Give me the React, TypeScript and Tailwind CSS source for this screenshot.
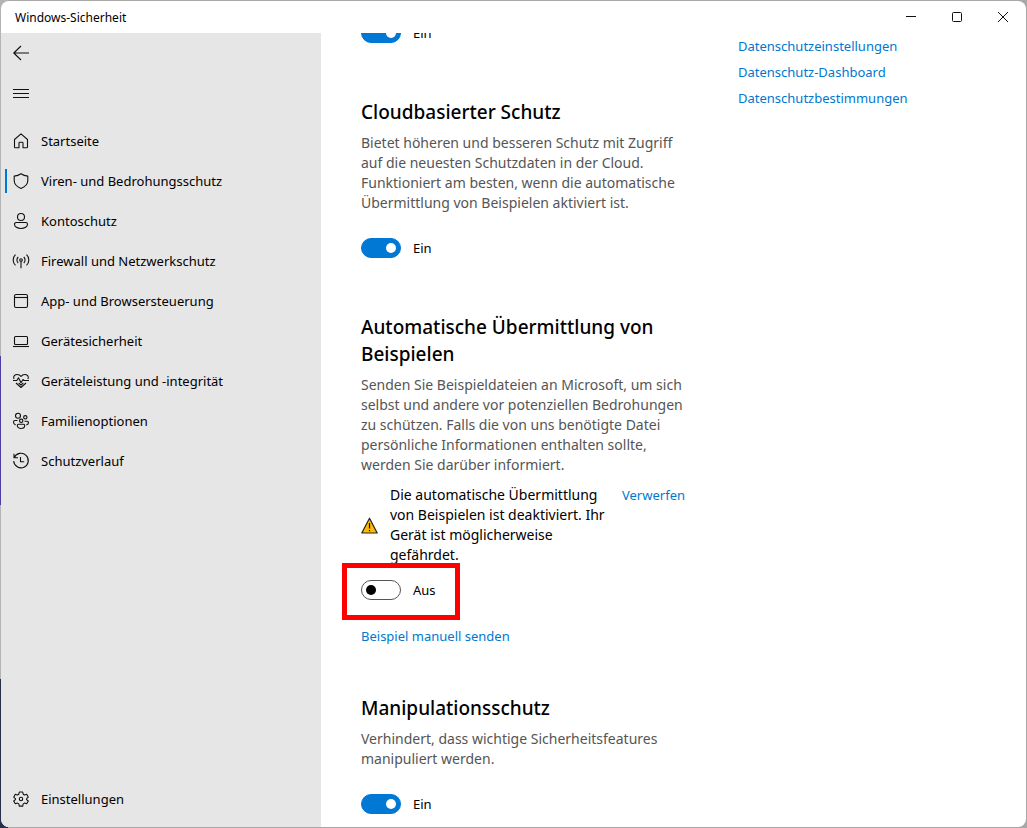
import { useId, useState, type ReactNode } from 'react';

const iconPaths: Record<string, ReactNode> = {
  home: <path d="M1.5 6.500 8 .8l6.500 5.700V14a.8.8 0 0 1-.8.8H10V10a.8.8 0 0 0-.8-.8H6.800A.8.8 0 0 0 6 10v4.800H2.300a.8.8 0 0 1-.8-.8z" />,
  shield: <path d="M8 .8c2 1.500 4.200 2.200 6.800 2.300v4.400c0 3.700-2.600 6.300-6.800 7.900-4.200-1.600-6.800-4.200-6.800-7.900V3.100C3.800 3 6 2.300 8 .8z" />,
  account: (
    <>
      <circle cx="8" cy="4" r="3.500" />
      <path d="M3.200 9.500h9.600a1.700 1.700 0 0 1 1.700 1.700c0 2.400-2.800 4.300-6.500 4.300s-6.500-1.900-6.500-4.300a1.700 1.700 0 0 1 1.700-1.700z" />
    </>
  ),
  network: (
    <>
      <circle cx="8" cy="7" r="1.300" />
      <path d="M8 8.300v7M5.200 10a4.200 4.200 0 0 1 0-6M10.800 10a4.200 4.200 0 0 0 0-6M2.500 12.300a7.200 7.200 0 0 1 0-10.600M13.500 12.300a7.200 7.200 0 0 0 0-10.600" />
    </>
  ),
  app: (
    <>
      <rect x="1.500" y="1.500" width="13" height="13" rx="1.500" />
      <path d="M1.500 4.500h13" />
    </>
  ),
  laptop: (
    <>
      <rect x="1.500" y="3.500" width="13" height="8" rx="1" />
      <path d="M0 13.500h16" />
    </>
  ),
  heart: (
    <>
      <path d="M1 6C-.2 3.200 2 1.500 4.300 1.500 6 1.500 7.200 2.300 8 3.500c.8-1.200 2-2 3.700-2 2.300 0 4.500 1.700 3.300 4.500" />
      <path d="M0 7.500h3.800l1.700-2.700 2.500 5 2-3.300 1 1H16M3 10l5 4.500L13 10M5.700 10 8 12.200 10.300 10" />
    </>
  ),
  family: (
    <>
      <circle cx="5" cy="2.800" r="2.500" />
      <circle cx="12.300" cy="4.300" r="1.700" />
      <circle cx="8.200" cy="7.800" r="1.700" />
      <path d="M4.500 7.500H2A1.500 1.500 0 0 0 .5 9c0 1.500.8 2.500 2.200 3M11.500 8.300H14a1.500 1.500 0 0 1 1.500 1.500c0 1.100-.8 1.800-2.200 2.200M5.500 11.300h5a1.200 1.200 0 0 1 1.200 1.200c0 1.800-1.600 3-3.700 3s-3.700-1.200-3.700-3a1.200 1.200 0 0 1 1.200-1.200z" />
    </>
  ),
  history: <path d="M1 .8v4h4M1.300 4.600A7.300 7.300 0 1 1 .7 8M7.500 4v4.800h3.700" />,
  settings: (
    <>
      <circle cx="8" cy="8" r="1.700" />
      <path d="m6.300 1-.5 2.200-1.300.8-2.200-.7L.7 6.200l1.700 1.500v.9L.7 10l1.600 2.800 2.200-.7 1.300.8.500 2.200h3.400l.5-2.200 1.300-.8 2.200.7 1.600-2.800-1.700-1.400v-.9l1.700-1.500-1.600-2.900-2.200.7-1.300-.8L9.700 1z" />
    </>
  ),
  back: <path d="M16 8H.8M8 1 .8 8 8 15" />,
  menu: <path d="M0 4.500h16M0 8.500h16M0 12.500h16" />,
};

function Icon({ name }: { name: string }) {
  return (
    <svg viewBox="0 0 16 16" className="size-4 shrink-0 overflow-visible" fill="none" stroke="#111" strokeWidth="1.100" strokeLinejoin="round" aria-hidden="true">
      {iconPaths[name]}
    </svg>
  );
}

const navItems = [
  { icon: 'home', label: 'Startseite' },
  { icon: 'shield', label: 'Viren- und Bedrohungsschutz', active: true },
  { icon: 'account', label: 'Kontoschutz' },
  { icon: 'network', label: 'Firewall und Netzwerkschutz' },
  { icon: 'app', label: 'App- und Browsersteuerung' },
  { icon: 'laptop', label: 'Gerätesicherheit' },
  { icon: 'heart', label: 'Geräteleistung und -integrität' },
  { icon: 'family', label: 'Familienoptionen' },
  { icon: 'history', label: 'Schutzverlauf' },
];

function NavItem({ icon, label, active }: { icon: string; label: string; active?: boolean }) {
  return (
    <a href="#" aria-current={active ? 'page' : undefined} className="flex h-10 items-center pl-1 text-[13px]">
      <span className={active ? 'mr-[6px] h-6 w-[2px] bg-[#0078d4]' : 'mr-[6px] h-6 w-[2px]'} />
      <span className="flex items-center gap-3">
        <Icon name={icon} />
        <span className="pt-[2px]">{label}</span>
      </span>
    </a>
  );
}

function Toggle({ initial }: { initial: boolean }) {
  const id = useId();
  const [on, setOn] = useState(initial);
  return (
    <div className="flex h-5 items-center gap-3">
      <input
        id={id}
        type="checkbox"
        role="switch"
        checked={on}
        onChange={(e) => setOn(e.target.checked)}
        className="flex h-5 w-10 appearance-none items-center rounded-full border border-[#555] bg-white px-1 before:size-[10px] before:rounded-full before:bg-black checked:justify-end checked:border-[#0078d4] checked:bg-[#0078d4] checked:before:bg-white"
      />
      <label htmlFor={id} className="pt-[2px] text-[13px]">
        {on ? 'Ein' : 'Aus'}
      </label>
    </div>
  );
}

function Heading({ children }: { children: ReactNode }) {
  return <h2 className="mb-[7px] text-[19px] leading-[27px] font-medium">{children}</h2>;
}

function Description({ children }: { children: ReactNode }) {
  return <p className="text-[14px] leading-5 text-[#555]">{children}</p>;
}

const linkClass = 'text-[13px] leading-5 text-[#0078d0] hover:underline';

export default function App() {
  return (
    <div className="flex min-h-screen bg-[#a8a8a8] bg-[linear-gradient(to_bottom,#b4b4b4_43%,#4a3fa0_43%,#4a3fa0_61%,#b4b4b4_61%,#b4b4b4_82%,#26304a_82%)] bg-[length:8px_100%] bg-no-repeat p-px font-['Noto_Sans','Open_Sans',sans-serif] text-black">
      <div className="flex grow flex-col overflow-hidden rounded-lg bg-white">
        <header className="flex h-8 items-center justify-between pl-[14px]">
          <h1 className="pt-[2px] text-[12px]">Windows-Sicherheit</h1>
          <div className="flex h-full">
            <button type="button" aria-label="Minimieren" className="flex w-[46px] items-center justify-center">
              <svg viewBox="0 0 10 10" className="size-[10px]" stroke="#111" fill="none"><path d="M0 4.500h10" /></svg>
            </button>
            <button type="button" aria-label="Maximieren" className="flex w-[46px] items-center justify-center">
              <svg viewBox="0 0 10 10" className="size-[10px]" stroke="#111" fill="none"><rect x=".5" y=".5" width="9" height="9" rx="1" /></svg>
            </button>
            <button type="button" aria-label="Schließen" className="flex w-[46px] items-center justify-center">
              <svg viewBox="0 0 10 10" className="size-[10px]" stroke="#111" fill="none"><path d="m0 0 10 10M10 0 0 10" /></svg>
            </button>
          </div>
        </header>

        <div className="flex grow">
          <nav className="flex w-80 shrink-0 flex-col bg-[#e6e6e6] pb-2">
            <button type="button" aria-label="Zurück" className="flex h-10 w-10 items-center justify-center">
              <Icon name="back" />
            </button>
            <button type="button" aria-label="Navigation öffnen" className="mb-2 flex h-10 w-10 items-center justify-center">
              <Icon name="menu" />
            </button>
            {navItems.map((item) => (
              <NavItem key={item.label} {...item} />
            ))}
            <div className="mt-auto">
              <NavItem icon="settings" label="Einstellungen" />
            </div>
          </nav>

          <main className="flex grow items-start gap-[53px] overflow-hidden pl-10">
            <div className="-mt-[10px] flex w-[324px] shrink-0 flex-col gap-14 pb-3">
              <Toggle initial />

              <section>
                <Heading>Cloudbasierter Schutz</Heading>
                <Description>
                  Bietet höheren und besseren Schutz mit Zugriff auf die neuesten Schutzdaten in der Cloud. Funktioniert am besten, wenn die automatische Übermittlung von Beispielen aktiviert ist.
                </Description>
                <div className="mt-[25px]">
                  <Toggle initial />
                </div>
              </section>

              <section>
                <Heading>Automatische Übermittlung von Beispielen</Heading>
                <Description>
                  Senden Sie Beispieldateien an Microsoft, um sich selbst und andere vor potenziellen Bedrohungen zu schützen. Falls die von uns benötigte Datei persönliche Informationen enthalten sollte, werden Sie darüber informiert.
                </Description>
                <div role="alert" className="mt-[10px] flex items-start">
                  <svg viewBox="0 0 17 17" className="mr-3 size-[17px] shrink-0 self-center" aria-hidden="true">
                    <path d="M8.500 1.200 16.200 16H.8z" fill="#ffb900" stroke="#222" strokeWidth="1.200" strokeLinejoin="round" />
                    <path d="M8.500 6v5.500M8.500 13v1.300" stroke="#111" strokeWidth="1.200" />
                  </svg>
                  <p className="w-[220px] text-[14px] leading-5">
                    Die automatische Übermittlung von Beispielen ist deaktiviert. Ihr Gerät ist möglicherweise gefährdet.
                  </p>
                  <button type="button" className={`${linkClass} ml-auto`}>Verwerfen</button>
                </div>
                <div className="relative mt-[15px]">
                  <Toggle initial={false} />
                  <div className="pointer-events-none absolute -top-[17px] -left-[19px] h-[57px] w-[118px] border-5 border-[#ff0000]" />
                </div>
                <div className="-mb-[7px] mt-[26px] flex">
                  <a href="#" className={linkClass}>Beispiel manuell senden</a>
                </div>
              </section>

              <section>
                <Heading>Manipulationsschutz</Heading>
                <Description>Verhindert, dass wichtige Sicherheitsfeatures manipuliert werden.</Description>
                <div className="mt-[25px]">
                  <Toggle initial />
                </div>
              </section>
            </div>

            <aside className="flex flex-col items-start gap-[6px] pt-[3px]">
              <a href="#" className={linkClass}>Datenschutzeinstellungen</a>
              <a href="#" className={linkClass}>Datenschutz-Dashboard</a>
              <a href="#" className={linkClass}>Datenschutzbestimmungen</a>
            </aside>
          </main>
        </div>
      </div>
    </div>
  );
}
